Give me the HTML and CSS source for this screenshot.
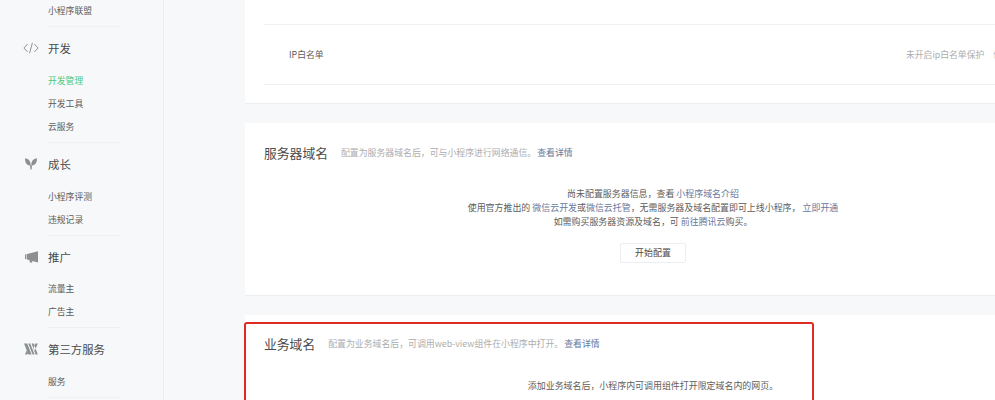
FILE: index.html
```html
<!DOCTYPE html>
<html lang="zh-CN">
<head>
    <meta charset="UTF-8">
    <title>开发管理</title>
    <link rel="stylesheet" href="styles.css">
</head>
<body>
    <nav class="sidebar">
        <ul class="menu menu-first">
            <li>小程序联盟</li>
        </ul>
        <div class="menu-title">
            <svg class="menu-icon" viewBox="0 0 16 12"><path d="M4.600 2 .9 6l3.700 4M11.400 2l3.700 4-3.700 4M9.400 .8 6.600 11.200" fill="none" stroke="#8f9396" stroke-width="1"/></svg>
            开发
        </div>
        <ul class="menu">
            <li class="active">开发管理</li>
            <li>开发工具</li>
            <li>云服务</li>
        </ul>
        <div class="menu-title">
            <svg class="menu-icon" viewBox="0 0 16 12"><path d="M2 .6C5.600 .6 7.700 3 7.700 7.600 4 7.600 2 5 2 .6ZM14 .6C10.400 .6 8.300 3 8.300 7.600 12 7.600 14 5 14 .6ZM7 7.200H9L8.600 11.600H7.400Z" fill="#8c9093"/></svg>
            成长
        </div>
        <ul class="menu">
            <li>小程序评测</li>
            <li>违规记录</li>
        </ul>
        <div class="menu-title menu-title-short">
            <svg class="menu-icon" viewBox="0 0 16 12"><path d="M2 3.400 3.400 3.100V8.200L2 7.900ZM4 3 15 .2V11.400L9.400 10 9 11.800 6.400 11.200 6.800 9.300 4 8.600Z" fill="#8c9093"/></svg>
            推广
        </div>
        <ul class="menu">
            <li>流量主</li>
            <li>广告主</li>
        </ul>
        <div class="menu-title">
            <svg class="menu-icon" viewBox="0 0 16 12"><path d="M1 .4H4.200L8.600 11.600H5.400ZM5.200 .4H7.200L11.600 11.600H9.600ZM8.600 .4H10.800L14.800 11.600H12.600ZM14.800 .4H12.400L10.600 4.800 11.800 7.800ZM3.600 7.400 2 11.600H4.400L4.900 10.300Z" fill="#8c9093"/></svg>
            第三方服务
        </div>
        <ul class="menu">
            <li>服务</li>
        </ul>
    </nav>

    <main class="content">
        <section class="card card-top">
            <div class="setting-row">
                <span class="setting-label">IP白名单</span>
                <span class="setting-status">未开启ip白名单保护</span>
                <a class="setting-link">修改</a>
            </div>
        </section>

        <section class="card card-server">
            <div class="card-head">
                <h3>服务器域名</h3>
                <p>配置为服务器域名后，可与小程序进行网络通信。<a>查看详情</a></p>
            </div>
            <div class="notice">
                <p>尚未配置服务器信息，查看 <a>小程序域名介绍</a></p>
                <p>使用官方推出的 <a>微信云开发</a>或<a>微信云托管</a>，无需服务器及域名配置即可上线小程序， <a>立即开通</a></p>
                <p>如需购买服务器资源及域名，可 <a>前往腾讯云</a>购买。</p>
                <button class="btn">开始配置</button>
            </div>
        </section>

        <section class="card card-business">
            <div class="highlight"></div>
            <div class="card-head">
                <h3>业务域名</h3>
                <p>配置为业务域名后，可调用web-view组件在小程序中打开。<a>查看详情</a></p>
            </div>
            <div class="notice">
                <p>添加业务域名后，小程序内可调用组件打开限定域名内的网页。</p>
            </div>
        </section>
    </main>
</body>
</html>
```

FILE: styles.css
```css
html, body {
    height: 100%;
}
body {
    margin: 0;
    display: flex;
    height: 400px;
    overflow: hidden;
    background: #f6f8f9;
    font-family: "Noto Sans CJK SC", "Liberation Sans", sans-serif;
    font-size: 8.8px;
    color: #4a4a4a;
}
a {
    color: #66789c;
    text-decoration: none;
}
p, ul, h3 {
    margin: 0;
    padding: 0;
}

/* sidebar */
.sidebar {
    flex: none;
    width: 163px;
    height: 400px;
    border-right: 1px solid #eceef0;
    overflow: hidden;
}
.menu {
    list-style: none;
    margin-left: 48px;
    width: 72px;
    padding-bottom: 4px;
    border-bottom: 1px solid #eef0f1;
}
.menu-first {
    margin-top: -1px;
}
.menu li {
    height: 23px;
    line-height: 23px;
    white-space: nowrap;
    color: #5c5c5c;
}
.menu li.active {
    color: #4ac97f;
}
.menu-title {
    display: flex;
    align-items: center;
    height: 42px;
    font-size: 11.4px;
    color: #4a4a4a;
}
.menu-title-short {
    height: 41px;
}
.menu-icon {
    width: 16px;
    height: 12px;
    margin: 0 9px 0 23px;
}

/* main column */
.content {
    flex: none;
    width: 816px;
    margin-left: 81px;
}
.card {
    position: relative;
    background: #fff;
    border-bottom: 1px solid #eceef0;
}
.card-top {
    height: 104px;
    margin-bottom: 19px;
    padding-top: 24px;
    box-sizing: border-box;
}
.setting-row {
    display: flex;
    align-items: center;
    height: 59px;
    margin-left: 19px;
    padding-left: 25px;
    border-top: 1px solid #eff0f1;
    border-bottom: 1px solid #eff0f1;
    white-space: nowrap;
}
.setting-label {
    width: 617px;
    color: #5c5c5c;
}
.setting-status {
    color: #adadad;
}
.setting-link {
    margin-left: 9px;
    color: #b5bdcc;
}
.card-server {
    height: 173px;
    margin-bottom: 19px;
    box-sizing: border-box;
}
.card-head {
    display: flex;
    align-items: center;
    padding: 19px 19px 0;
    height: 20px;
    white-space: nowrap;
}
.card-head h3 {
    font-size: 12.8px;
    font-weight: normal;
    color: #4a4a4a;
    margin-right: 13px;
}
.card-head p {
    font-size: 8.9px;
    color: #adadad;
}
.card-head a {
    margin-left: 1px;
}
.notice {
    padding-top: 25px;
    text-align: center;
    font-size: 8.95px;
    line-height: 14px;
    color: #5c5c5c;
}
.btn {
    display: block;
    width: 66px;
    height: 20px;
    margin: 14px auto 0;
    padding: 0;
    background: #fff;
    border: 1px solid #eceeef;
    border-radius: 2px;
    font: inherit;
    color: #4a4a4a;
}
.card-business {
    height: 200px;
}
.card-business .card-head {
    padding-top: 18px;
}
.card-business .notice {
    padding-top: 26px;
}
.highlight {
    position: absolute;
    left: -1px;
    top: 7px;
    width: 566px;
    height: 200px;
    border: 2px solid #e02b20;
    border-radius: 3px;
}
```
